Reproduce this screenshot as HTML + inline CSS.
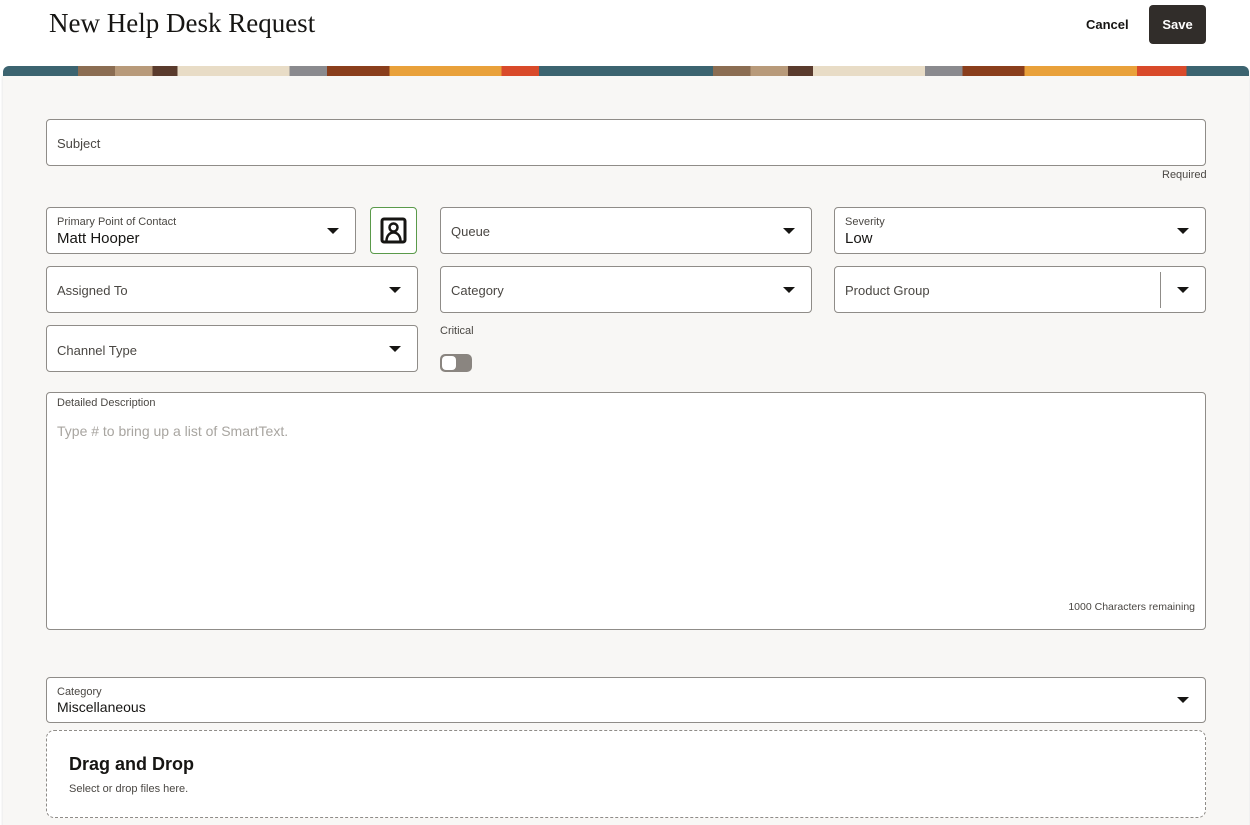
<!DOCTYPE html>
<html><head><meta charset="utf-8"><style>
*{box-sizing:border-box;margin:0;padding:0}
html,body{width:1250px;height:825px;overflow:hidden}
body{background:#fff;font-family:"Liberation Sans",sans-serif;color:#161513;position:relative}
.abs{position:absolute}
h1{position:absolute;left:49px;top:8px;font-family:"Liberation Serif",serif;font-weight:normal;font-size:27px;color:#161513}
.cancel{left:1086px;top:17px;font-size:13px;font-weight:bold}
.save{left:1149px;top:5px;width:57px;height:39px;background:#312d2a;color:#fff;border-radius:4px;font-size:13px;font-weight:bold;text-align:center;line-height:39px}
.banner{left:3px;top:66px;width:1246px;height:10px;border-radius:6px 6px 0 0;overflow:hidden;
background:linear-gradient(90deg,#3c6470 0 6%,#8b6d52 6% 9%,#b89a7a 9% 12%,#5a3b2d 12% 14%,#e8dcc6 14% 23%,#8a8a8e 23% 26%,#8a3e1c 26% 31%,#e9a13a 31% 40%,#d94a2a 40% 43%,#3c6470 43% 57%,#8b6d52 57% 60%,#b89a7a 60% 63%,#5a3b2d 63% 65%,#e8dcc6 65% 74%,#8a8a8e 74% 77%,#8a3e1c 77% 82%,#e9a13a 82% 91%,#d94a2a 91% 95%,#3c6470 95%)}
.panel{left:3px;top:75px;width:1246px;height:760px;background:#f8f7f5;box-shadow:0 1px 3px rgba(0,0,0,.15)}
.f{position:absolute;background:#fff;border:1px solid #8f8c88;border-radius:4px}
.lbl{position:absolute;left:10px;font-size:13px;color:#4a4743}
.sm{position:absolute;left:10px;top:8px;font-size:11px;color:#4a4743}
.val{position:absolute;left:10px;top:22px;font-size:15px;color:#161513}
.arr{position:absolute;right:16px;top:50%;margin-top:-3px;width:0;height:0;border-left:6px solid transparent;border-right:6px solid transparent;border-top:6px solid #161513}
</style></head><body>
<h1>New Help Desk Request</h1>
<div class="abs cancel">Cancel</div>
<div class="abs save">Save</div>
<div class="abs panel"></div>
<div class="abs banner"></div>

<div class="f" style="left:46px;top:119px;width:1160px;height:47px"><div class="lbl" style="top:16px">Subject</div></div>
<div class="abs" style="left:1162px;top:169px;font-size:11px;color:#4a4743">Required</div>

<div class="f" style="left:46px;top:207px;width:310px;height:47px"><div class="sm">Primary Point of Contact</div><div class="val">Matt Hooper</div><div class="arr"></div></div>
<div class="f" style="left:370px;top:207px;width:47px;height:47px;border-color:#5a9a4a">
<svg width="27" height="27" viewBox="0 0 27 27" style="position:absolute;left:9px;top:9px"><rect x="2" y="2" width="23" height="23" rx="2" fill="none" stroke="#161513" stroke-width="3"/><circle cx="13.5" cy="10.5" r="4" fill="none" stroke="#161513" stroke-width="2.5"/><path d="M6.5 24c0-5 3-8.5 7-8.5s7 3.5 7 8.5" fill="none" stroke="#161513" stroke-width="2.5"/></svg></div>
<div class="f" style="left:440px;top:207px;width:372px;height:47px"><div class="lbl" style="top:16px">Queue</div><div class="arr"></div></div>
<div class="f" style="left:834px;top:207px;width:372px;height:47px"><div class="sm">Severity</div><div class="val">Low</div><div class="arr"></div></div>

<div class="f" style="left:46px;top:266px;width:372px;height:47px"><div class="lbl" style="top:16px">Assigned To</div><div class="arr"></div></div>
<div class="f" style="left:440px;top:266px;width:372px;height:47px"><div class="lbl" style="top:16px">Category</div><div class="arr"></div></div>
<div class="f" style="left:834px;top:266px;width:372px;height:47px"><div class="lbl" style="top:16px">Product Group</div><div style="position:absolute;left:325px;top:5px;width:1px;height:36px;background:#8f8c88"></div><div class="arr"></div></div>

<div class="f" style="left:46px;top:325px;width:372px;height:47px"><div class="lbl" style="top:17px">Channel Type</div><div class="arr"></div></div>
<div class="abs" style="left:440px;top:325px;font-size:11px;color:#4a4743">Critical</div>
<div class="abs" style="left:440px;top:354px;width:32px;height:18px;border-radius:5px;background:#8a8580"><div style="position:absolute;left:2px;top:2px;width:14px;height:14px;border-radius:4px;background:#fff"></div></div>

<div class="f" style="left:46px;top:392px;width:1160px;height:238px"><div class="sm" style="top:4px">Detailed Description</div><div style="position:absolute;left:10px;top:30px;font-size:14px;color:#a8a5a0">Type # to bring up a list of SmartText.</div><div style="position:absolute;right:10px;bottom:16px;font-size:10.5px;color:#4a4743">1000 Characters remaining</div></div>

<div class="f" style="left:46px;top:677px;width:1160px;height:46px"><div class="sm" style="top:8px">Category</div><div class="val" style="top:21px;font-size:14px">Miscellaneous</div><div class="arr"></div></div>
<div class="abs" style="left:46px;top:730px;width:1160px;height:88px;background:#fff;border:1px dashed #8f8c88;border-radius:8px">
<div style="position:absolute;left:22px;top:23px;font-size:18px;font-weight:bold">Drag and Drop</div>
<div style="position:absolute;left:22px;top:52px;font-size:11px;color:#4a4743">Select or drop files here.</div></div>
</body></html>
